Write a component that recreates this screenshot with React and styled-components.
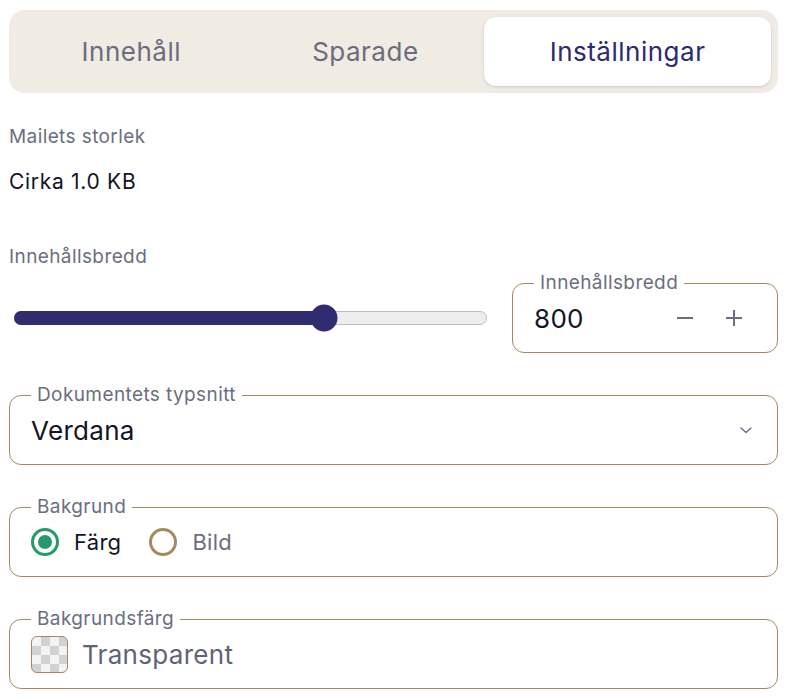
import React, { useState } from 'react';
import styled, { createGlobalStyle } from 'styled-components';

const GlobalStyle = createGlobalStyle`
  html, body {
    margin: 0;
    background: #ffffff;
  }
  body {
    padding: 10px 10px 0 9px;
    font-family: Inter, "Noto Sans", sans-serif;
    overflow: hidden;
  }
`;

const Page = styled.div`
  display: flex;
  flex-direction: column;
`;

const TabBar = styled.div`
  display: flex;
  padding: 7px;
  background-color: #f0ebe3;
  border-radius: 16px;
`;

const Tab = styled.button`
  flex: 1 1 auto;
  height: 69px;
  border: none;
  border-radius: 12px;
  font-family: inherit;
  font-size: 26px;
  letter-spacing: 0.5px;
  cursor: pointer;
  background-color: ${p => (p.$active ? '#ffffff' : 'transparent')};
  color: ${p => (p.$active ? '#2e2a6e' : '#6b6d7d')};
  box-shadow: ${p => (p.$active ? '0 1px 3px rgba(0,0,0,0.15)' : 'none')};
`;

const Label = styled.div`
  font-size: 19px;
  letter-spacing: 0.4px;
  line-height: 22px;
  color: #6b6e80;
  margin-top: ${p => p.$top || 0}px;
`;

const Value = styled.div`
  font-size: 21px;
  letter-spacing: 0.7px;
  line-height: 24px;
  color: #111527;
  margin-top: 22px;
`;

const WidthRow = styled.div`
  display: grid;
  grid-template-columns: 1fr 266px;
  gap: 24px;
  align-items: start;
  margin-top: 4px;
`;

const SliderArea = styled.div`
  position: relative;
  height: 30px;
  margin: 31px 1px 0 5px;
  display: flex;
  align-items: center;
`;

const Track = styled.div`
  position: relative;
  width: 100%;
  height: 14px;
  border-radius: 7px;
  background-color: #eeeeee;
  border: 1px solid #bdbdbd;
  box-sizing: border-box;
`;

const Fill = styled.div`
  position: absolute;
  left: -1px;
  top: -1px;
  bottom: -1px;
  border-radius: 7px;
  background-color: #312b70;
`;

const Thumb = styled.div`
  position: absolute;
  top: 50%;
  width: 27px;
  height: 27px;
  border-radius: 50%;
  background-color: #312b70;
  transform: translate(-50%, -50%);
`;

const Field = styled.fieldset`
  margin: ${p => p.$top || 0}px 0 0 0;
  padding: 0 20px 10px 21px;
  border: 1px solid #a48a5e;
  border-radius: 12px;
  min-width: 0;
`;

const Legend = styled.legend`
  padding: 0 6px;
  font-size: 19px;
  letter-spacing: 0.4px;
  line-height: 22px;
  color: #6b6e80;
`;

const FieldRow = styled.div`
  display: flex;
  align-items: center;
  height: 48px;
  gap: ${p => p.$gap || 0}px;
`;

const BigText = styled.span`
  font-size: 26px;
  letter-spacing: 0.3px;
  color: ${p => (p.$muted ? '#5f6378' : '#111527')};
  flex: ${p => (p.$grow ? 1 : 'none')};
`;

const StepButton = styled.button`
  width: 34px;
  height: 34px;
  display: flex;
  align-items: center;
  justify-content: center;
  border: none;
  background: none;
  padding: 0;
  color: #6b6e80;
  cursor: pointer;
`;

const Steppers = styled.div`
  display: flex;
  gap: 15px;
  margin-right: 6px;
`;

const Chevron = styled.svg`
  width: 14px;
  height: 14px;
  margin-right: 4px;
  color: #6b6e80;
`;

const RadioOption = styled.label`
  display: flex;
  align-items: center;
  gap: 15px;
  font-size: 22px;
  letter-spacing: 0.3px;
  color: ${p => (p.$checked ? '#111527' : '#6b6e80')};
  cursor: pointer;
`;

const RadioCircle = styled.span`
  width: 28px;
  height: 28px;
  box-sizing: border-box;
  border-radius: 50%;
  border: 3px solid ${p => (p.$checked ? '#279a6b' : '#a48a5e')};
  display: flex;
  align-items: center;
  justify-content: center;
  &::after {
    content: '';
    display: ${p => (p.$checked ? 'block' : 'none')};
    width: 14px;
    height: 14px;
    border-radius: 50%;
    background-color: #279a6b;
  }
`;

const Swatch = styled.span`
  width: 37px;
  height: 37px;
  box-sizing: border-box;
  border-radius: 6px;
  border: 1px solid #a48a5e;
  background-color: #f3f3f3;
  background-image: conic-gradient(#d2d2d2 25%, transparent 0 50%, #d2d2d2 0 75%, transparent 0);
  background-size: 18px 18px;
`;

const tabs = ['Innehåll', 'Sparade', 'Inställningar'];

export default function App() {
  const [active, setActive] = useState(2);
  const [width, setWidth] = useState(800);
  const [bg, setBg] = useState('color');
  const percent = 65.6;

  return (
    <Page>
      <GlobalStyle />
      <TabBar>
        {tabs.map((t, i) => (
          <Tab key={t} $active={i === active} onClick={() => setActive(i)}>{t}</Tab>
        ))}
      </TabBar>

      <Label $top={33}>Mailets storlek</Label>
      <Value>Cirka 1.0 KB</Value>

      <Label $top={52}>Innehållsbredd</Label>
      <WidthRow>
        <SliderArea>
          <Track>
            <Fill style={{ width: `${percent}%` }} />
            <Thumb style={{ left: `${percent}%` }} />
          </Track>
        </SliderArea>
        <Field>
          <Legend>Innehållsbredd</Legend>
          <FieldRow>
            <BigText $grow>{width}</BigText>
            <Steppers>
              <StepButton onClick={() => setWidth(w => w - 10)}>
                <svg width="18" height="18" viewBox="0 0 18 18"><path d="M1 9h16" stroke="currentColor" strokeWidth="2" /></svg>
              </StepButton>
              <StepButton onClick={() => setWidth(w => w + 10)}>
                <svg width="18" height="18" viewBox="0 0 18 18"><path d="M1 9h16M9 1v16" stroke="currentColor" strokeWidth="2" /></svg>
              </StepButton>
            </Steppers>
          </FieldRow>
        </Field>
      </WidthRow>

      <Field $top={31}>
        <Legend>Dokumentets typsnitt</Legend>
        <FieldRow>
          <BigText $grow>Verdana</BigText>
          <Chevron viewBox="0 0 14 14" fill="none">
            <path d="M2 5l5 4.5L12 5" stroke="currentColor" strokeWidth="1.4" strokeLinecap="round" strokeLinejoin="round" />
          </Chevron>
        </FieldRow>
      </Field>

      <Field $top={31}>
        <Legend>Bakgrund</Legend>
        <FieldRow $gap={28}>
          <RadioOption $checked={bg === 'color'} onClick={() => setBg('color')}>
            <RadioCircle $checked={bg === 'color'} />
            Färg
          </RadioOption>
          <RadioOption $checked={bg === 'image'} onClick={() => setBg('image')}>
            <RadioCircle $checked={bg === 'image'} />
            Bild
          </RadioOption>
        </FieldRow>
      </Field>

      <Field $top={31}>
        <Legend>Bakgrundsfärg</Legend>
        <FieldRow $gap={14}>
          <Swatch />
          <BigText $muted>Transparent</BigText>
        </FieldRow>
      </Field>
    </Page>
  );
}
